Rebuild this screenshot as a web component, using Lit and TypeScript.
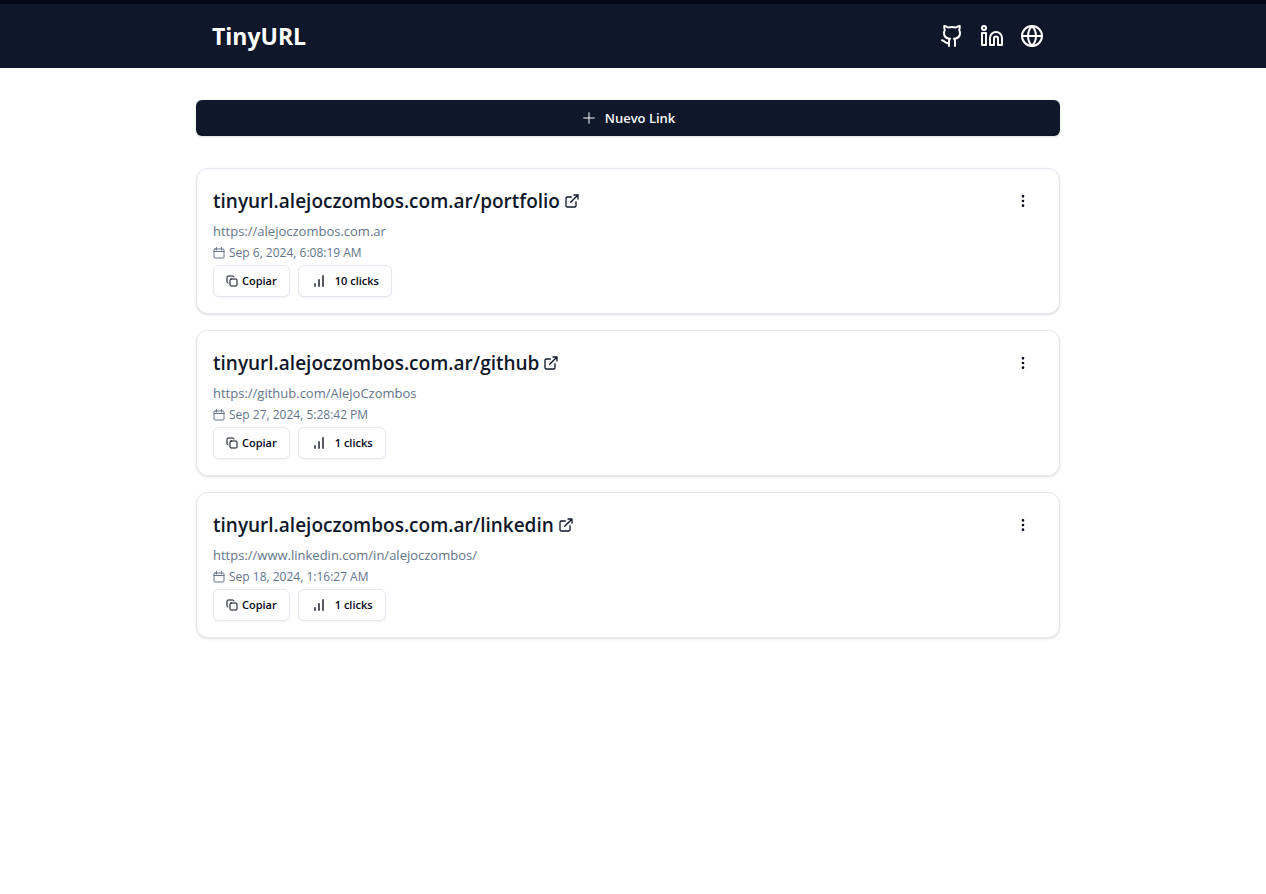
import { LitElement, html, css, svg } from "lit";
import { customElement, property } from "lit/decorators.js";

interface ShortLink {
  slug: string;
  target: string;
  created: string;
  clicks: number;
}

const DOMAIN = "tinyurl.alejoczombos.com.ar";

const LINKS: ShortLink[] = [
  { slug: "portfolio", target: "https://alejoczombos.com.ar", created: "Sep 6, 2024, 6:08:19 AM", clicks: 10 },
  { slug: "github", target: "https://github.com/AlejoCzombos", created: "Sep 27, 2024, 5:28:42 PM", clicks: 1 },
  { slug: "linkedin", target: "https://www.linkedin.com/in/alejoczombos/", created: "Sep 18, 2024, 1:16:27 AM", clicks: 1 },
];

const shapes = {
  github: svg`<path d="M9 22v-4.500c0-1.200.4-2.100 1-2.700C6.800 14.500 4 13.200 4 9c0-1.100.3-2 .8-2.800C4.200 4.800 4.100 3.300 4.300 2c1.400.1 2.700.7 3.900 1.500a16 16 0 0 1 7.600 0C17 2.700 18.300 2.100 19.700 2c.2 1.300.1 2.800-.5 4.200.5.8.8 1.700.8 2.800 0 4.200-2.800 5.500-6 5.800.6.6 1 1.500 1 2.700V22M9 19.300c-3.800.7-4.200-2.500-7-3"/>`,
  linkedin: svg`<circle cx="4" cy="4" r="2"/><path d="M2 9h4v12H2zM22 21h-4v-6.500a2 2 0 0 0-4 0V21h-4v-7a6 6 0 0 1 12 0z"/>`,
  globe: svg`<circle cx="12" cy="12" r="10"/><path d="M12 2a14.500 14.500 0 0 0 0 20 14.500 14.500 0 0 0 0-20M2 12h20"/>`,
  plus: svg`<path d="M4 12h16M12 4v16"/>`,
  external: svg`<path d="M15 3h6v6M10 14 21 3M18 13v6a2 2 0 0 1-2 2H5a2 2 0 0 1-2-2V8a2 2 0 0 1 2-2h6"/>`,
  calendar: svg`<path d="M7 1v5M17 1v5M2 9h20"/><rect x="2" y="4" width="20" height="18" rx="2"/>`,
  copy: svg`<rect x="8" y="8" width="14" height="14" rx="2"/><path d="M4 16c-1.100 0-2-.9-2-2V4c0-1.100.9-2 2-2h10c1.100 0 2 .9 2 2"/>`,
  bars: svg`<path d="M12 20V10M18 20V4M6 20v-4"/>`,
  dots: svg`<circle cx="12" cy="12" r="1"/><circle cx="12" cy="5" r="1"/><circle cx="12" cy="19" r="1"/>`,
};

const icon = (name: keyof typeof shapes) => html`
  <svg class="icon ${name}" viewBox="0 0 24 24" fill="none" stroke="currentColor" stroke-width="2"
    stroke-linecap="round" stroke-linejoin="round" aria-hidden="true">${shapes[name]}</svg>`;

const base = css`
  * { box-sizing: border-box; }
  h1, h2, p, ul { margin: 0; padding: 0; }
  a { color: inherit; text-decoration: none; }
  button { font: inherit; cursor: pointer; }
  .icon { display: block; flex: none; width: 16px; height: 16px; }
`;

@customElement("link-card")
export class LinkCard extends LitElement {
  @property({ attribute: false }) link!: ShortLink;

  static styles = [base, css`
    :host { display: block; }
    .card {
      display: flex;
      flex-direction: column;
      gap: 4px;
      padding: 16px;
      border: 1px solid #e2e8f0;
      border-radius: 12px;
      background: #fff;
      box-shadow: 0 1px 3px rgb(0 0 0 / 0.1), 0 1px 2px -1px rgb(0 0 0 / 0.1);
    }
    .top { display: flex; justify-content: space-between; align-items: center; }
    .title { font-size: 19px; line-height: 32px; font-weight: 550; color: #0f172a; }
    .title a { display: flex; align-items: center; gap: 4px; }
    .more {
      display: flex; align-items: center; justify-content: center;
      width: 40px; height: 32px; padding: 0; border: 0; background: none; color: #020617;
    }
    .target { font-size: 13px; line-height: 20px; color: #64748b; }
    .date { display: flex; align-items: center; gap: 4px; font-size: 12px; line-height: 16px; color: #64748b; }
    .actions { display: flex; gap: 8px; }
    .action {
      display: flex; align-items: center; gap: 8px;
      height: 32px; padding: 0 12px;
      border: 1px solid #e2e8f0; border-radius: 6px; background: #fff;
      box-shadow: 0 1px 2px rgb(0 0 0 / 0.05);
      font-size: 11px; line-height: 16px; font-weight: 600; color: #020617;
    }
    .action.tight { gap: 4px; }
    .calendar, .copy { width: 12px; height: 12px; }
  `];

  render() {
    const { slug, target, created, clicks } = this.link;
    return html`
      <article class="card">
        <div class="top">
          <h2 class="title"><a href="https://${DOMAIN}/${slug}">${DOMAIN}/${slug}${icon("external")}</a></h2>
          <button class="more" type="button" aria-label="Opciones">${icon("dots")}</button>
        </div>
        <p class="target"><a href=${target}>${target}</a></p>
        <p class="date">${icon("calendar")}<time>${created}</time></p>
        <div class="actions">
          <button class="action tight" type="button">${icon("copy")}Copiar</button>
          <button class="action" type="button">${icon("bars")}${clicks} clicks</button>
        </div>
      </article>`;
  }
}

@customElement("app-root")
export class AppRoot extends LitElement {
  static styles = [base, css`
    :host {
      display: block;
      min-height: 100vh;
      background: #fff;
      color: #020617;
      font-family: "Segoe UI", "Open Sans", "Noto Sans", sans-serif;
    }
    .header { padding-right: 10px; border-top: 4px solid #020617; background: #0f172a; color: #fff; }
    .bar {
      display: flex; align-items: center; justify-content: space-between;
      max-width: 896px; height: 64px; margin: 0 auto; padding: 0 32px;
    }
    .brand { font-size: 23px; line-height: 32px; font-weight: 700; }
    .social { display: flex; gap: 16px; }
    .social .icon { width: 24px; height: 24px; }
    .page { padding-right: 10px; }
    .content {
      display: flex; flex-direction: column; gap: 32px;
      max-width: 896px; margin: 0 auto; padding: 32px 16px;
    }
    .new {
      display: flex; align-items: center; justify-content: center; gap: 8px;
      height: 36px; border: 0; border-radius: 6px;
      background: #0f172a; color: #f8fafc;
      box-shadow: 0 1px 3px rgb(0 0 0 / 0.1), 0 1px 2px -1px rgb(0 0 0 / 0.1);
      font-size: 13px; line-height: 20px; font-weight: 600;
    }
    .new .icon { stroke-width: 1.5; }
    .links { display: flex; flex-direction: column; gap: 16px; list-style: none; }
  `];

  render() {
    return html`
      <header class="header">
        <div class="bar">
          <h1 class="brand"><a href="/">TinyURL</a></h1>
          <nav class="social">
            <a href="https://github.com/AlejoCzombos" aria-label="GitHub">${icon("github")}</a>
            <a href="https://www.linkedin.com/in/alejoczombos/" aria-label="LinkedIn">${icon("linkedin")}</a>
            <a href="https://alejoczombos.com.ar" aria-label="Portfolio">${icon("globe")}</a>
          </nav>
        </div>
      </header>
      <main class="page">
        <div class="content">
          <button class="new" type="button">${icon("plus")}Nuevo Link</button>
          <ul class="links">
            ${LINKS.map((link) => html`<li><link-card .link=${link}></link-card></li>`)}
          </ul>
        </div>
      </main>`;
  }
}
